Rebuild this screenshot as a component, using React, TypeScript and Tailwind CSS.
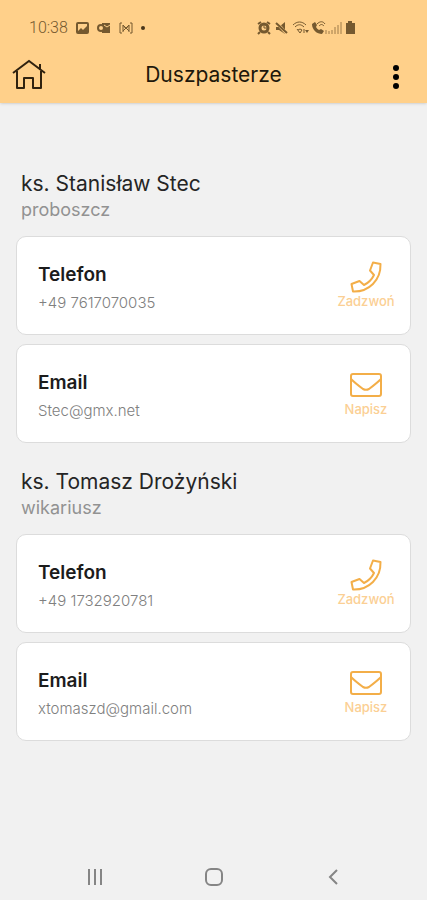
type ContactKind = "phone" | "email";

type Contact = {
  kind: ContactKind;
  label: string;
  value: string;
};

type Priest = {
  name: string;
  role: string;
  contacts: Contact[];
};

const PRIESTS: Priest[] = [
  {
    name: "ks. Stanisław Stec",
    role: "proboszcz",
    contacts: [
      { kind: "phone", label: "Telefon", value: "+49 7617070035" },
      { kind: "email", label: "Email", value: "Stec@gmx.net" },
    ],
  },
  {
    name: "ks. Tomasz Drożyński",
    role: "wikariusz",
    contacts: [
      { kind: "phone", label: "Telefon", value: "+49 1732920781" },
      { kind: "email", label: "Email", value: "xtomaszd@gmail.com" },
    ],
  },
];

function contactHref(contact: Contact) {
  return contact.kind === "phone" ? `tel:${contact.value.replace(/\s/g, "")}` : `mailto:${contact.value}`;
}

function PhoneIcon() {
  return (
    <svg viewBox="0 0 32 32" className="size-8" fill="none" stroke="currentColor" strokeWidth="2" strokeLinejoin="round" aria-hidden="true">
      <path d="M30.500 3 23 1.500 20 9.500l4 4.500c-2.200 4.500-5.500 7.800-10 10l-4.500-4-8 3L3 30.500C19 31 31 19 30.500 3z" />
    </svg>
  );
}

function EnvelopeIcon() {
  return (
    <svg viewBox="0 0 32 24" className="h-6 w-8" fill="none" stroke="currentColor" strokeWidth="2" strokeLinejoin="round" aria-hidden="true">
      <rect x="1" y="1" width="30" height="22" rx="2" />
      <path d="M1 6c4 4 8 7 12 10 2 1 4 1 6 0 4-3 8-6 12-10" />
    </svg>
  );
}

function StatusBar() {
  return (
    <div className="flex h-7 items-center justify-between pr-18 pl-7 text-[#75592f]">
      <div className="flex items-center gap-2">
        <time className="pl-px font-['Roboto',sans-serif] text-base leading-5 font-light">10:38</time>
        <svg width="13" height="12" viewBox="0 0 13 12" fill="none" stroke="currentColor" strokeWidth="2" aria-hidden="true">
          <rect x="1" y="1" width="11" height="10" rx="1" />
          <path d="m2 9 3-3 2 2 4-4v6H2z" fill="currentColor" stroke="none" />
        </svg>
        <svg width="14" height="12" viewBox="0 0 14 12" fill="none" stroke="currentColor" strokeWidth="2" aria-hidden="true">
          <path d="M5 1h8v10H5z" fill="currentColor" stroke="none" />
          <circle cx="4" cy="6" r="3" fill="#ffd08a" />
          <path d="m7 3 3 2 3-2" stroke="#ffd08a" strokeWidth="1" />
        </svg>
        <svg width="14" height="12" viewBox="0 0 14 12" fill="none" stroke="currentColor" aria-hidden="true">
          <path d="M3 1H1v10h2M11 1h2v10h-2M4 10V3l3 4 3-4v7" />
          <path d="m4 3 6 6M10 3 4 9" />
        </svg>
        <span className="size-1 rounded-full bg-[#49351a]" />
      </div>
      <svg width="98" height="14" viewBox="0 0 98 14" fill="none" stroke="currentColor" aria-hidden="true">
        {/* alarm */}
        <circle cx="7" cy="7" r="4" strokeWidth="3" />
        <path d="M7 4v3h3" />
        <path d="m1 3 3-2M10 1l3 2M3 11l-2 2M11 11l2 2" strokeWidth="2" />
        {/* muted speaker */}
        <path d="M19 6h3l6-5v12l-6-4h-3z" fill="currentColor" stroke="none" />
        <path d="m19 1 11 12" stroke="#ffd08a" strokeWidth="3" />
        <path d="m19 2 11 10" strokeWidth="2" />
        {/* wifi */}
        <path d="M36 4c4-4 9-4 13 0M38 6c3-3 6-3 9 0M41 9q2-2 4 0" />
        <path d="m40 8 3 4 2-3M47 12V8" />
        <path d="M48 9h4l-2 3z" fill="currentColor" stroke="none" />
        {/* wifi call */}
        <path d="M55 3c0 6 5 10 10 10l2-3-3-2-2 1q-2-1-3-3l1-2-2-3z" fill="currentColor" stroke="none" />
        <path d="M60 3c3-3 6-3 8 0M62 5c2-2 3-2 5 0" />
        {/* signal */}
        <path d="M69 13V9M72 13v-3M75 13V9M78 13V6M81 13V4M84 13V1" opacity="0.7" />
        <path d="M91 2V0h4v2h3v11H89V2z" fill="currentColor" stroke="none" />
      </svg>
    </div>
  );
}

function Header() {
  return (
    <header className="bg-[#ffd08a] pt-[14px] shadow-sm">
      <StatusBar />
      <div className="grid h-[61px] grid-cols-[1fr_auto_1fr] items-center px-3 pt-1">
        <a href="#home" aria-label="Strona główna" className="justify-self-start text-[#30220f]">
          <svg width="34" height="32" viewBox="0 0 34 32" fill="none" stroke="currentColor" strokeWidth="2" aria-hidden="true">
            <path d="M1 14 17 2l16 12" />
            <path d="M5 12v17h7V19h9v10h8V12" strokeLinejoin="round" />
            <path d="M28 5v6" />
          </svg>
        </a>
        <h1 className="text-[21px] leading-7 text-[#20170b]">Duszpasterze</h1>
        <button type="button" aria-label="Menu" className="mr-4 flex flex-col gap-[3px] justify-self-end pt-1">
          <span className="size-[6px] rounded-full bg-black" />
          <span className="size-[6px] rounded-full bg-black" />
          <span className="size-[6px] rounded-full bg-black" />
        </button>
      </div>
    </header>
  );
}

function ContactCard({ contact }: { contact: Contact }) {
  const isPhone = contact.kind === "phone";

  return (
    <li className="flex h-[99px] items-start justify-between rounded-[10px] border border-[#dcdcdc] bg-white pt-6 pr-[14px] pl-[21px]">
      <div>
        <h3 className="text-[19px] leading-7 font-semibold text-[#1c1c1c]">{contact.label}</h3>
        <p className="text-[15px] leading-7 font-light text-[#808080]">{contact.value}</p>
      </div>
      <a href={contactHref(contact)} className="flex w-[60px] flex-col items-center text-[#f3ae48]">
        <span className="flex h-8 items-center">{isPhone ? <PhoneIcon /> : <EnvelopeIcon />}</span>
        <span className="text-[13px] leading-4 font-medium text-[#fbcf94]">{isPhone ? "Zadzwoń" : "Napisz"}</span>
      </a>
    </li>
  );
}

function PriestSection({ priest }: { priest: Priest }) {
  return (
    <section>
      <div className="pl-[5px]">
        <h2 className="text-[21px] leading-7 text-[#252525]">{priest.name}</h2>
        <p className="text-[18px] leading-6 text-[#929292]">{priest.role}</p>
      </div>
      <ul className="mt-[14px] flex flex-col gap-[9px]">
        {priest.contacts.map((contact) => (
          <ContactCard key={contact.kind} contact={contact} />
        ))}
      </ul>
    </section>
  );
}

function SystemNav() {
  return (
    <nav aria-label="System" className="grid grid-cols-3 justify-items-center px-[35px] pb-[14px] text-[#858585]">
      <button type="button" aria-label="Ostatnie">
        <svg width="18" height="18" viewBox="0 0 18 18" stroke="currentColor" strokeWidth="2" aria-hidden="true">
          <path d="M3 1v16M9 1v16M15 1v16" />
        </svg>
      </button>
      <button type="button" aria-label="Ekran główny">
        <svg width="18" height="18" viewBox="0 0 18 18" fill="none" stroke="currentColor" strokeWidth="2" aria-hidden="true">
          <rect x="1" y="1" width="16" height="16" rx="5" />
        </svg>
      </button>
      <button type="button" aria-label="Wstecz">
        <svg width="18" height="18" viewBox="0 0 18 18" fill="none" stroke="currentColor" strokeWidth="2" aria-hidden="true">
          <path d="m13 2-7 7 7 7" />
        </svg>
      </button>
    </nav>
  );
}

export default function App() {
  return (
    <div className="flex min-h-screen flex-col bg-[#f1f1f1] font-['Inter','Open_Sans',sans-serif]">
      <Header />
      <main className="flex flex-1 flex-col gap-[25px] px-4 pt-[67px] pb-6">
        {PRIESTS.map((priest) => (
          <PriestSection key={priest.name} priest={priest} />
        ))}
      </main>
      <SystemNav />
    </div>
  );
}
